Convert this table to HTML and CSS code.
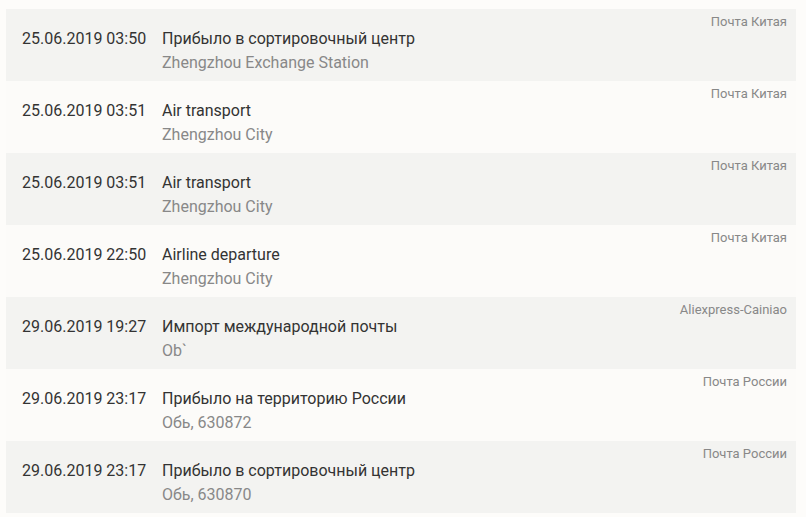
FILE: index.html
```html
<!DOCTYPE html>
<html lang="ru">
<head>
<meta charset="utf-8">
<link rel="stylesheet" href="styles.css">
</head>
<body>
<div class="list">
  <div class="row odd">
    <div class="date">25.06.2019 03:50</div>
    <div class="info"><div class="title">Прибыло в сортировочный центр</div><div class="place">Zhengzhou Exchange Station</div></div>
    <div class="src">Почта Китая</div>
  </div>
  <div class="row even">
    <div class="date">25.06.2019 03:51</div>
    <div class="info"><div class="title">Air transport</div><div class="place">Zhengzhou City</div></div>
    <div class="src">Почта Китая</div>
  </div>
  <div class="row odd">
    <div class="date">25.06.2019 03:51</div>
    <div class="info"><div class="title">Air transport</div><div class="place">Zhengzhou City</div></div>
    <div class="src">Почта Китая</div>
  </div>
  <div class="row even">
    <div class="date">25.06.2019 22:50</div>
    <div class="info"><div class="title">Airline departure</div><div class="place">Zhengzhou City</div></div>
    <div class="src">Почта Китая</div>
  </div>
  <div class="row odd">
    <div class="date">29.06.2019 19:27</div>
    <div class="info"><div class="title">Импорт международной почты</div><div class="place">Ob`</div></div>
    <div class="src">Aliexpress-Cainiao</div>
  </div>
  <div class="row even">
    <div class="date">29.06.2019 23:17</div>
    <div class="info"><div class="title">Прибыло на территорию России</div><div class="place">Обь, 630872</div></div>
    <div class="src">Почта России</div>
  </div>
  <div class="row odd">
    <div class="date">29.06.2019 23:17</div>
    <div class="info"><div class="title">Прибыло в сортировочный центр</div><div class="place">Обь, 630870</div></div>
    <div class="src">Почта России</div>
  </div>
</div>
</body>
</html>
```
FILE: styles.css
```css
html, body {
  margin: 0;
  padding: 0;
  background: #fdfcfa;
  font-family: Roboto, "Liberation Sans", sans-serif;
}
.list {
  padding: 9px 10px 0 6px;
}
.row {
  display: flex;
  align-items: flex-start;
  height: 72px;
  box-sizing: border-box;
  padding: 0 9px 0 16px;
}
.row.odd { background: #f3f3f1; }
.row.even { background: #fcfbf9; }
.date {
  width: 140px;
  flex: none;
  margin-top: 18px;
  font-size: 16px;
  line-height: 24px;
  color: #333333;
}
.info {
  flex: 1;
  margin-top: 18px;
  font-size: 16px;
  line-height: 24px;
}
.title { color: #333333; }
.place { color: #888888; }
.src {
  flex: none;
  margin-top: 5px;
  font-size: 13px;
  line-height: 16px;
  color: #888888;
}
```
